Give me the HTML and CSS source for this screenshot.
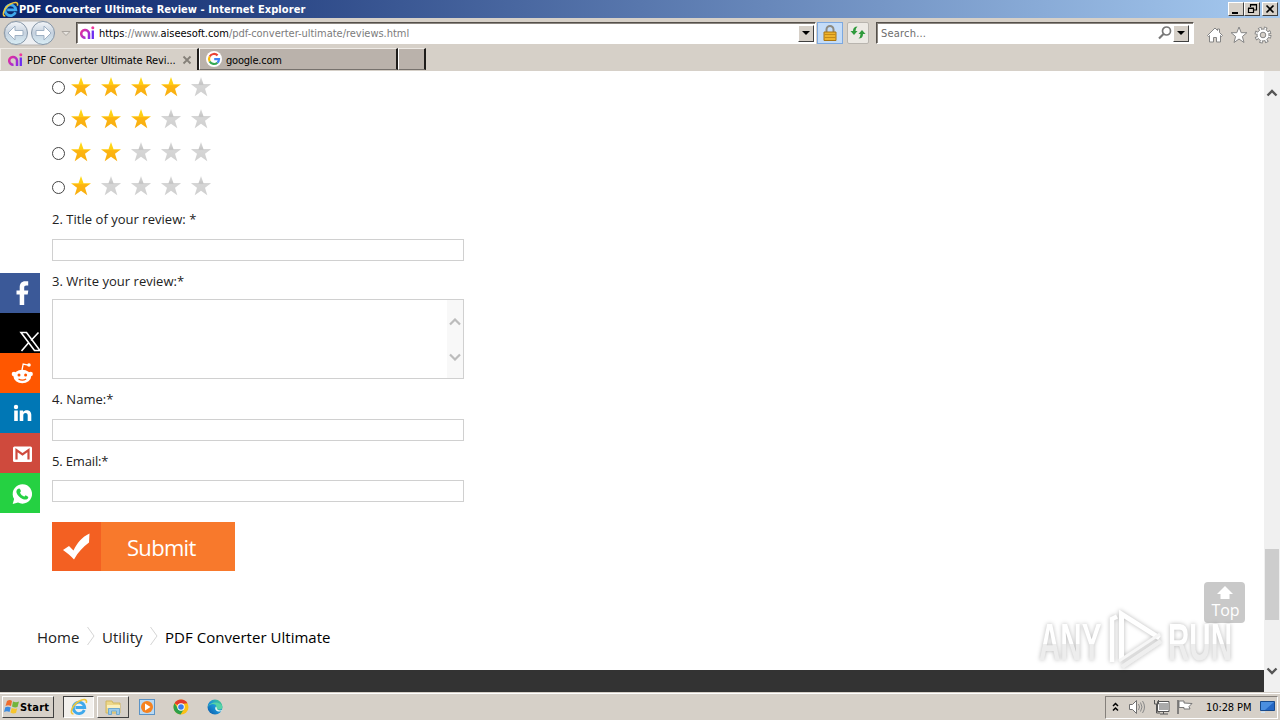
FILE: index.html
```html
<!DOCTYPE html>
<html lang="en">
<head>
    <meta charset="UTF-8">
    <meta name="viewport" content="width=device-width, initial-scale=1.0">
    <title>PDF Converter Ultimate Review</title>
    <link rel="stylesheet" href="styles.css">
</head>
<body>

<!-- shared shapes -->
<svg class="defs" width="0" height="0">
    <defs>
        <linearGradient id="gold" x1="0" y1="0" x2="0" y2="1">
            <stop offset="0" stop-color="#ffdf1c"/>
            <stop offset="0.4" stop-color="#ffca12"/>
            <stop offset="0.45" stop-color="#fdb511"/>
            <stop offset="1" stop-color="#f8ae10"/>
        </linearGradient>
        <linearGradient id="silver" x1="0" y1="0" x2="0" y2="1">
            <stop offset="0" stop-color="#dedede"/>
            <stop offset="0.38" stop-color="#c4c4c4"/>
            <stop offset="0.45" stop-color="#d6d6d6"/>
            <stop offset="1" stop-color="#cfcfcf"/>
        </linearGradient>
        <linearGradient id="aigrad" x1="0" y1="0" x2="1" y2="1">
            <stop offset="0" stop-color="#e5309a"/>
            <stop offset="1" stop-color="#8d2be8"/>
        </linearGradient>
        <linearGradient id="edgegrad" x1="0" y1="1" x2="1" y2="0">
            <stop offset="0" stop-color="#0b56a5"/>
            <stop offset="0.5" stop-color="#1a93d8"/>
            <stop offset="1" stop-color="#4fd47c"/>
        </linearGradient>
        <linearGradient id="disc" x1="0" y1="0" x2="0" y2="1">
            <stop offset="0" stop-color="#f4f6f9"/>
            <stop offset="0.5" stop-color="#c5d1de"/>
            <stop offset="1" stop-color="#d9eef6"/>
        </linearGradient>
        <symbol id="star" viewBox="0 0 20 20"><path d="M10 0l2.500 7.200H20l-6 4.600 2.300 7.400L10 14.800l-6.300 4.400L6 11.800 0 7.200h7.500z"/></symbol>
        <symbol id="ai" viewBox="0 0 16 16">
            <path d="M9 14V8.500a3.900 3.900 0 1 0-3.500 4.200" fill="none" stroke="url(#aigrad)" stroke-width="2.500"/>
            <path d="M12.800 5.500V14" stroke="#6c2df0" stroke-width="2.300"/><circle cx="12.800" cy="2.800" r="1.500" fill="#f0399b"/>
        </symbol>
        <symbol id="ie" viewBox="0 0 18 18">
            <path d="M14.300 12A5.700 5.700 0 1 1 14.700 9.500H5.500" fill="none" stroke="#3fa9ec" stroke-width="2.900"/>
            <path d="M3.500 16C-1 16 2 7 9 3.200c4.500-2.500 8.500-2.400 7.300 1.800" fill="none" stroke="#efc63a" stroke-width="1.600"/>
        </symbol>
    </defs>
</svg>

<div class="window">
    <div class="titlebar">
        <svg width="17" height="17"><use href="#ie"/></svg>
        <span class="title-text">PDF Converter Ultimate Review - Internet Explorer</span>
        <div class="win-buttons">
            <span class="win-btn"><svg width="14" height="12"><path d="M3 9h6v2H3z"/></svg></span>
            <span class="win-btn"><svg width="14" height="12"><path d="M5.500 4V2h6v5H9M5 1.500h7M3.500 5.500h5v4h-5zM3 5h6" fill="none" stroke="#000" stroke-width="1.200"/></svg></span>
            <span class="win-btn close"><svg width="14" height="12"><path d="M3.500 2.500l7 7M10.500 2.500l-7 7" stroke="#000" stroke-width="1.700"/></svg></span>
        </div>
    </div>

    <div class="navbar">
        <svg class="travel" width="72" height="29">
            <rect x="4" y="3" width="50" height="24" rx="12" fill="#eef0f3" stroke="#b9b5b0"/>
            <circle cx="16" cy="15" r="11.500" fill="url(#disc)" stroke="#8797a8"/>
            <circle cx="43" cy="15" r="11.500" fill="url(#disc)" stroke="#8797a8"/>
            <path d="M8 15l7-7v4.500h8v5h-8V22z" fill="#fff" stroke="#9fb1c4"/>
            <path d="M51 15l-7-7v4.500h-8v5h8V22z" fill="#fff" stroke="#9fb1c4"/>
            <path d="M62 13.500h8l-4 4z" fill="#e7e4df" stroke="#aaa59f"/>
        </svg>
        <div class="address">
            <svg width="16" height="16"><use href="#ai"/></svg>
            <span class="url"><b>https</b>://www.<b>aiseesoft.com</b>/pdf-converter-ultimate/reviews.html</span>
            <span class="drop"></span>
        </div>
        <span class="tool lock"><svg width="18" height="18"><path d="M5.500 9V5.500a3.500 3.500 0 0 1 7 0V9" fill="none" stroke="#8d8a80" stroke-width="2"/><path d="M3 8h12v8.500H3z" fill="#eeb32c" stroke="#a87412"/><path d="M3.500 10.500h11M3.500 13.500h11" stroke="#c48a18"/></svg></span>
        <span class="tool refresh"><svg width="18" height="18"><path d="M5 11L1.500 7H4q0-4.500 4.500-4.500Q6.500 4 6.500 7h2z" fill="#2f9a3c"/><path d="M13 6l3.500 4H14q0 4.500-4.500 4.500 2-1.500 2-4.500h-2z" fill="#2f9a3c"/></svg></span>
        <div class="search">
            <span>Search...</span>
            <svg width="16" height="16"><circle cx="9.500" cy="6" r="4" fill="#fff" stroke="#777" stroke-width="1.700"/><path d="M6.500 9L2 13.500" stroke="#777" stroke-width="2.200"/></svg>
            <span class="drop"></span>
        </div>
        <div class="commands">
            <svg width="18" height="18"><path d="M1.500 9.500L9 2l2.500 2.500V3h2v3.500l3 3-1 1-1-1V16h-4v-4.500h-3V16h-4V9.500l-1 1z" fill="#fff" stroke="#858585"/></svg>
            <svg width="18" height="18"><path d="M9 1l2.200 5.700h5.700l-4.500 3.800L14 16.500 9 13l-5 3.500 1.600-6L1.100 6.700h5.700z" fill="#fff" stroke="#858585"/></svg>
            <svg width="18" height="18"><circle cx="9" cy="9" r="6.500" fill="none" stroke="#858585" stroke-width="4" stroke-dasharray="3 2.105"/><circle cx="9" cy="9" r="6" fill="#fff" stroke="#858585"/><circle cx="9" cy="9" r="6.500" fill="none" stroke="#fff" stroke-width="2.200" stroke-dasharray="1.400 3.705" stroke-dashoffset="-.8"/><circle cx="9" cy="9" r="2.800" fill="#d6d0c8" stroke="#858585"/></svg>
        </div>
    </div>

    <div class="tabs">
        <div class="tab active">
            <svg width="16" height="16"><use href="#ai"/></svg>
            <span class="tab-name">PDF Converter Ultimate Revi...</span>
            <svg width="10" height="10"><path d="M1.500 1.500l7 7M8.500 1.500l-7 7" stroke="#858079" stroke-width="1.800"/></svg>
        </div>
        <div class="tab google">
            <svg width="16" height="16" viewBox="0 0 16 16"><circle cx="8" cy="8" r="8" fill="#fff"/><g fill="none" stroke-width="2.200"><path d="M11.600 4.400A5 5 0 0 0 3.700 5.500" stroke="#ea4335"/><path d="M3.700 5.500a5 5 0 0 0 0 5" stroke="#fbbc05"/><path d="M3.700 10.500a5 5 0 0 0 7.700 1.200" stroke="#34a853"/><path d="M11.400 11.700A5 5 0 0 0 13 8.200H8.200" stroke="#4285f4"/></g></svg>
            <span>google.com</span>
        </div>
        <div class="tab blank"></div>
    </div>

    <div class="viewport">
        <div class="page">
            <form class="review-form">
                <div class="rating r4"><input type="radio" name="rating"><svg class="on"><use href="#star"/></svg><svg class="on"><use href="#star"/></svg><svg class="on"><use href="#star"/></svg><svg class="on"><use href="#star"/></svg><svg><use href="#star"/></svg></div>
                <div class="rating r3"><input type="radio" name="rating"><svg class="on"><use href="#star"/></svg><svg class="on"><use href="#star"/></svg><svg class="on"><use href="#star"/></svg><svg><use href="#star"/></svg><svg><use href="#star"/></svg></div>
                <div class="rating r2"><input type="radio" name="rating"><svg class="on"><use href="#star"/></svg><svg class="on"><use href="#star"/></svg><svg><use href="#star"/></svg><svg><use href="#star"/></svg><svg><use href="#star"/></svg></div>
                <div class="rating r1"><input type="radio" name="rating"><svg class="on"><use href="#star"/></svg><svg><use href="#star"/></svg><svg><use href="#star"/></svg><svg><use href="#star"/></svg><svg><use href="#star"/></svg></div>

                <label for="title">2. Title of your review: *</label>
                <input type="text" id="title">
                <label class="l3" for="review">3. Write your review:*</label>
                <div class="textarea" id="review">
                    <div class="mini-scroll">
                        <svg width="12" height="8"><path d="M1 6.500l5-5 5 5" fill="none" stroke="#bcbcbc" stroke-width="2.200"/></svg>
                        <svg width="12" height="8"><path d="M1 1.500l5 5 5-5" fill="none" stroke="#bcbcbc" stroke-width="2.200"/></svg>
                    </div>
                </div>
                <label for="name">4. Name:*</label>
                <input type="text" id="name">
                <label class="l5" for="email">5. Email:*</label>
                <input type="text" id="email">

                <button type="button" class="submit">
                    <span class="check"><svg width="30" height="30"><path d="M0 18l6-4 4.500 4.500C14 11 19 5 26.500 1.500l-.5 9C20 15 15 20 11 27.500 8 24 4 21 0 18z" fill="#fff"/></svg></span>
                    <span class="submit-text">Submit</span>
                </button>
            </form>

            <div class="breadcrumb">
                <span class="c-home">Home</span>
                <svg width="10" height="20"><path d="M1.500 1l6.500 9-6.500 9" fill="none" stroke="#d5d5d5"/></svg>
                <span class="c-util">Utility</span>
                <svg width="10" height="20"><path d="M1.500 1l6.500 9-6.500 9" fill="none" stroke="#d5d5d5"/></svg>
                <span class="c-pdf">PDF Converter Ultimate</span>
            </div>

            <div class="footer"></div>
        </div>

        <div class="scrollbar">
            <svg class="up" width="12" height="9"><path d="M1.500 7.500L6 3l4.500 4.500" fill="none" stroke="#555" stroke-width="2.400"/></svg>
            <div class="thumb"></div>
            <svg class="down" width="12" height="9"><path d="M1.500 1.500L6 6l4.500-4.500" fill="none" stroke="#555" stroke-width="2.400"/></svg>
        </div>

        <div class="share">
            <span class="fb"><svg width="40" height="40"><path d="M19.700 32V21.500h-3.200v-4h3.200v-3c0-4.200 2-6.300 5.500-6.300h3v4.300h-1.800c-1.700 0-2.200.8-2.200 2.200v2.800h4.100l-.6 4h-3.500V32z" fill="#fff"/></svg></span>
            <span class="x"><svg width="40" height="40"><path d="M21 19.500h5.500L40 37.500h-5.500zM38.500 19.500l-7.500 8M28.800 29.500L21.500 38" fill="none" stroke="#fff" stroke-width="1.600"/></svg></span>
            <span class="reddit"><svg width="40" height="40"><ellipse cx="22.300" cy="23.500" rx="8.800" ry="6.800" fill="#fff"/><circle cx="14" cy="21" r="2.300" fill="#fff"/><circle cx="30.600" cy="21" r="2.300" fill="#fff"/><path d="M22 17l1.200-6 5 1.200" fill="none" stroke="#fff" stroke-width="1.300"/><circle cx="29" cy="12" r="1.800" fill="#fff"/><circle cx="19" cy="22" r="1.500" fill="#ff5700"/><circle cx="25.600" cy="22" r="1.500" fill="#ff5700"/><path d="M18.500 26q3.800 2.400 7.600 0" fill="none" stroke="#ff5700" stroke-width="1.200"/></svg></span>
            <span class="linkedin"><svg width="40" height="40"><g fill="#fff"><circle cx="16" cy="14" r="2.200"/><path d="M14.200 17.500h3.600V28h-3.600zM19.700 17.500h3.400v1.400c2-2.800 8.200-2.400 8.200 2.900V28h-3.600v-5.500c0-3.200-4.400-3.200-4.400 0V28h-3.600z"/></g></svg></span>
            <span class="gmail"><svg width="40" height="40"><rect x="13" y="13.500" width="19" height="15.500" rx="1.500" fill="#fff"/><path d="M16.500 26.500v-9.300l6 4.300 6-4.300v9.300" fill="none" stroke="#cf4a3d" stroke-width="2.200"/></svg></span>
            <span class="whatsapp"><svg width="40" height="40"><path d="M12.700 31l1.400-5A9.700 9.700 0 1 1 18 29.600z" fill="#fff"/><path d="M18.400 15.800c1.500-.8 1.800.4 2.500 2.200.2.800-1.200 1.400-.7 2.100 1 1.800 2 2.700 3.800 3.500.8.300 1.200-1.500 2-1.200 2 1 2.700 1.200 2.100 2.500-.8 2-3.300 2-5.500 1-3.200-1.300-5-3.700-6-5.900-.7-2 .4-3.700 1.800-4.200z" fill="#25d142"/></svg></span>
        </div>

        <div class="to-top">
            <svg width="18" height="16"><path d="M9 1l8 8h-3.500v5h-9V9H1z" fill="#fff"/></svg>
            <span>Top</span>
        </div>

        <div class="watermark">
            <span class="any">ANY</span>
            <svg width="60" height="64" viewBox="0 0 60 64"><path d="M6 53V10l5-2.500" fill="none" stroke="#fff" stroke-width="4.500"/><path d="M15.500 50V5l38 24" fill="none" stroke="#fff" stroke-width="5"/><path d="M55 32L16 58" fill="none" stroke="#efefef" stroke-width="4.500"/><path d="M54 25L13 52" fill="none" stroke="#f6f6f6" stroke-width="3"/></svg>
            <span class="run">RUN</span>
        </div>
    </div>

    <div class="taskbar">
        <div class="start">
            <svg width="16" height="16"><path d="M3 2q3-2 5 0L7 7Q4 5.500 1.500 7z" fill="#ef6c2c"/><path d="M9 2.500q3 1.500 6 0L13.500 8Q11 9 8 7.500z" fill="#73b53c"/><path d="M1.300 8.200Q4 7 6.700 8.500L5.500 13Q3 11.500 0 13z" fill="#3b8be0"/><path d="M7.700 9q3 1.500 5.500.3L12 14q-3 1.200-5.500-.5z" fill="#f7c52d"/></svg>
            <span>Start</span>
        </div>
        <div class="task pressed"><svg width="18" height="18"><use href="#ie"/></svg></div>
        <div class="task raised"><svg width="18" height="18"><path d="M2 3h6l1 2h7v10H2z" fill="#edd788" stroke="#d0b660"/><path d="M3 7h13v3H3z" fill="#fbf0bd"/><path d="M4.500 16.500v-6h11v6h-3V13h-5v3.500z" fill="#9bcaeb" stroke="#6fa9cf"/></svg></div>
        <svg class="pin media" width="16" height="16"><rect x=".5" y=".5" width="15" height="15" fill="#b9d9f3" stroke="#5b93c6"/><circle cx="8" cy="8" r="6" fill="#f58220"/><path d="M6 4.500v7L11.500 8z" fill="#fff"/></svg>
        <svg class="pin chrome" width="16" height="16"><circle cx="8" cy="8" r="7.500" fill="#fbc116"/><path d="M8 8L1.500 4.200A7.500 7.500 0 0 1 14.500 4.200L8 5z" fill="#e33b2e"/><path d="M1.500 4.200A7.500 7.500 0 0 0 7.500 15.500L11 10 5 9.500z" fill="#2da04b"/><circle cx="8" cy="8" r="3.700" fill="#fff"/><circle cx="8" cy="8" r="2.800" fill="#3b7ded"/></svg>
        <svg class="pin edge" width="16" height="16"><circle cx="8" cy="8" r="7.500" fill="url(#edgegrad)"/><path d="M15 11.500c-3 1-6.500.4-6.500-2 0-1.200.8-1.500.8-2.500C9 4.500 3 4 1 8c1-6 14-6 14.400 0 .1 2.500-3.400 3-4.400 2 .5 1.500 2.500 2 4 1.500z" fill="#56d3a6"/><path d="M9 7.500c-1.500 1.500-.8 4.500 2.500 5 1.500.2 2.700-.2 3.300-.7l.5-.8c-2.800 1-5.800 0-5.500-2z" fill="#e8f3f5"/></svg>
        <div class="tray">
            <svg width="8" height="12"><path d="M1 5l2.500-2.500L6 5M1 9.500L3.500 7 6 9.500" fill="none" stroke="#000" stroke-width="1.500"/></svg>
            <svg class="sound" width="18" height="16"><path d="M1.500 5.500h3l4-4v13l-4-4h-3z" fill="#fff" stroke="#707070"/><path d="M10.500 5q2 3 0 6M12.500 3.500q3 4.500 0 9M14.500 2q4 6 0 12" fill="none" stroke="#888"/></svg>
            <svg class="net" width="17" height="16"><path d="M5.500 3.500h10v8h-10z" fill="#aaa" stroke="#fff"/><path d="M4.500 2.500h11.500v10H4.500zM7 15h8M10.500 12.500V15M1.500 1v4h4V1M3.500 5v9H7" fill="none" stroke="#555"/></svg>
            <svg class="flag" width="18" height="16"><path d="M3 2h5v2l8 .5-3 3 1 2.500H8V8.500H3z" fill="#fff" stroke="#777"/><path d="M2 1v14" stroke="#666" stroke-width="1.500"/></svg>
            <span class="clock">10:28 PM</span>
            <svg class="desk" width="15" height="14"><path d="M.5 1.500h14v9H.5z" fill="#2467c5" stroke="#174a8c"/><path d="M1 2h13L5 10H1z" fill="#4b8fe0"/><path d="M1 11.500h4v1.500H1z" fill="#cfe3f5"/></svg>
        </div>
    </div>
</div>

</body>
</html>
```
FILE: styles.css
```css
* {
    box-sizing: border-box;
}
body {
    margin: 0;
    font-family: "Open Sans", "Noto Sans", sans-serif;
    overflow: hidden;
}
svg {
    display: block;
    flex: none;
}
.defs {
    position: absolute;
}
.window {
    width: 1280px;
    height: 720px;
    display: flex;
    flex-direction: column;
    background: #d6d0c8;
    font-family: "DejaVu Sans Condensed", "DejaVu Sans", sans-serif;
    font-size: 11px;
    white-space: nowrap;
}

/* title bar */
.titlebar {
    height: 18px;
    display: flex;
    align-items: center;
    padding: 0 2px;
    background: linear-gradient(to right, #0a246a, #a6caf0);
    color: #fff;
}
.title-text {
    font-weight: bold;
    font-size: 11px;
    letter-spacing: 0.07px;
}
.win-buttons {
    display: flex;
    margin-left: auto;
}
.win-btn {
    width: 16px;
    height: 14px;
    background: #d6d0c8;
    border: 1px solid;
    border-color: #fff #404040 #404040 #fff;
}
.win-btn.close {
    margin-left: 2px;
}

/* address row */
.navbar {
    height: 30px;
    display: flex;
    align-items: flex-start;
}
.travel {
    margin-right: 4px;
}
.address, .search {
    height: 22px;
    margin-top: 4px;
    display: flex;
    align-items: center;
    background: #fff;
    border: 1px solid;
    border-color: #55504b #fff #fff #55504b;
    box-shadow: inset 1px 1px 0 #8b8680;
}
.address {
    width: 740px;
    padding: 0 1px 0 3px;
}
.url {
    margin-left: 3px;
    color: #7b7b7b;
    letter-spacing: -0.03px;
}
.url b {
    font-weight: normal;
    color: #000;
}
.drop {
    width: 16px;
    height: 17px;
    background: #d6d0c8;
    border: 1px solid;
    border-color: #fff #404040 #404040 #fff;
    display: flex;
    align-items: center;
    justify-content: center;
}
.drop::before {
    content: "";
    border: 4px solid transparent;
    border-top-color: #000;
    border-bottom: 0;
}
.address .drop {
    margin-left: auto;
}
.tool {
    height: 22px;
    margin-top: 4px;
    display: flex;
    align-items: center;
    justify-content: center;
    border: 1px solid #b9b5af;
    background: #ece9e4;
}
.lock {
    width: 26px;
    margin-left: 1px;
    background: #c4dcf8;
    border-color: #7ca8e0;
}
.refresh {
    width: 22px;
    margin-left: 4px;
    border-radius: 2px;
}
.search {
    width: 318px;
    margin-left: 7px;
    padding: 0 4px;
    color: #6d6d6d;
    letter-spacing: 0.2px;
}
.search svg {
    margin-left: auto;
}
.commands {
    display: flex;
    gap: 6px;
    margin: 8px 0 0 12px;
}

/* tabs */
.tabs {
    height: 23px;
    display: flex;
}
.tab {
    display: flex;
    align-items: center;
    height: 22px;
    border-right: 2px solid #1e1c1a;
    border-top: 1px solid #eeeae5;
}
.tab.active {
    width: 199px;
    padding-left: 7px;
    border-left: 1px solid #eeeae5;
}
.tab-name {
    width: 151px;
    margin: 1px 4px 0 3px;
    letter-spacing: -0.07px;
}
.tab.google {
    width: 199px;
    padding-left: 6px;
    gap: 4px;
    letter-spacing: -0.2px;
    background: #bab2ab;
    border-left: 1px solid #fff;
    border-bottom: 1px solid #77726d;
}
.tab.google span {
    margin-top: 2px;
}
.tab.blank {
    width: 28px;
    background: #bab2ab;
    border-left: 1px solid #fff;
    border-bottom: 1px solid #77726d;
}

/* page area */
.viewport {
    position: relative;
    display: flex;
    height: 621px;
    background: #fff;
    font-family: "Open Sans", "Noto Sans", sans-serif;
}
.page {
    width: 1264px;
    display: flex;
    flex-direction: column;
}
.review-form {
    padding-left: 52px;
    display: flex;
    flex-direction: column;
    align-items: flex-start;
}
.rating {
    display: flex;
    align-items: center;
    gap: 10px;
}
.rating.r4 {
    height: 31px;
}
.rating.r3 {
    height: 33px;
}
.rating.r2, .rating.r1 {
    height: 34px;
}
.rating.r1 {
    margin-bottom: 1px;
}
.rating input {
    appearance: none;
    width: 13px;
    height: 13px;
    margin: 2px -4px 0 0;
    border: 1px solid #444;
    border-radius: 50%;
    background: #fff;
}
.rating svg {
    width: 20px;
    height: 20px;
    fill: url(#silver);
}
.rating svg.on {
    fill: url(#gold);
}
.review-form label {
    height: 35px;
    line-height: 30px;
    font-size: 13px;
    color: #222;
    letter-spacing: 0.03px;
}
.review-form label.l3 {
    height: 38px;
    line-height: 40px;
}
.review-form input[type="text"] {
    width: 412px;
    height: 22px;
    margin: 0;
    border: 1px solid #d0d0d0;
    background: #fff;
}
.textarea {
    width: 412px;
    height: 80px;
    border: 1px solid #d0d0d0;
    display: flex;
    justify-content: flex-end;
}
.mini-scroll {
    width: 16px;
    padding: 18px 2px 17px;
    background: #f8f8f8;
    display: flex;
    flex-direction: column;
    justify-content: space-between;
}
.review-form .textarea + label {
    height: 40px;
    line-height: 40px;
}
.review-form label.l5 {
    height: 39px;
    line-height: 40px;
    letter-spacing: -0.15px;
}
.submit {
    width: 183px;
    height: 49px;
    margin: 20px 0 0;
    padding: 0;
    border: 0;
    display: flex;
    background: #f8792c;
    color: #fff;
    font-family: inherit;
    font-size: 22px;
}
.check {
    width: 49px;
    height: 49px;
    padding: 10px 0 0 11px;
    background: #f36022;
}
.submit-text {
    line-height: 51px;
    margin-left: 26px;
    letter-spacing: -0.7px;
}
.breadcrumb {
    display: flex;
    align-items: center;
    height: 30px;
    margin: 51px 0 0 37px;
    font-size: 15px;
    color: #222;
}
.breadcrumb svg {
    margin: -2px 6px 0;
}
.c-home {
    width: 43px;
}
.c-util {
    width: 41px;
}
.c-pdf {
    color: #000;
    letter-spacing: 0.03px;
}
.footer {
    height: 22px;
    margin-top: auto;
    background: #333;
}
.scrollbar {
    width: 16px;
    background: #f0f0f0;
    display: flex;
    flex-direction: column;
    align-items: center;
    padding: 17px 0;
}
.thumb {
    width: 14px;
    height: 71px;
    margin-top: 452px;
    background: #cdcdcd;
}
.scrollbar .down {
    margin-top: auto;
    margin-bottom: -1px;
}

/* things floating over the page */
.share {
    position: absolute;
    left: 0;
    top: 202px;
}
.share span {
    display: block;
    width: 40px;
    height: 40px;
}
.fb {
    background: #3b5998;
}
.x {
    background: #000;
}
.reddit {
    background: #ff5700;
}
.linkedin {
    background: #0077b5;
}
.gmail {
    background: #cf4a3d;
}
.whatsapp {
    background: #25d142;
}
.to-top {
    position: absolute;
    left: 1204px;
    top: 511px;
    width: 41px;
    height: 41px;
    border-radius: 4px;
    background: #c9c9c9;
    color: #fff;
    font-size: 16px;
    line-height: 18px;
    display: flex;
    flex-direction: column;
    align-items: center;
    padding-top: 3px;
}
.to-top span {
    margin: 0 0 0 2px;
}
.watermark {
    position: absolute;
    left: 1039px;
    top: 538px;
    display: flex;
    align-items: center;
    font-family: "Liberation Sans", Arial, sans-serif;
    font-size: 51px;
    font-weight: bold;
    line-height: 40px;
    filter: drop-shadow(0 0 2px rgba(0, 0, 0, 0.28));
}
.watermark span {
    width: 112px;
    margin: 4px -48px 0 0;
    transform: scaleX(0.58);
    transform-origin: left center;
    color: transparent;
    background: linear-gradient(#fff 52%, #ededed 52%);
    background-clip: text;
}
.watermark svg {
    margin: 0 2px 0 3px;
}

/* taskbar */
.taskbar {
    height: 28px;
    display: flex;
    align-items: center;
    padding: 1px 2px 0;
    border-top: 1px solid #d6d0c8;
    box-shadow: inset 0 1px 0 #fff;
    background: #d6d0c8;
}
.start {
    width: 52px;
    height: 22px;
    display: flex;
    align-items: center;
    padding-left: 1px;
    font-weight: bold;
    letter-spacing: 0.2px;
    border: 1px solid;
    border-color: #fff #404040 #404040 #fff;
}
.task {
    height: 22px;
    display: flex;
    align-items: center;
    justify-content: center;
    border: 1px solid;
}
.task.pressed {
    width: 31px;
    margin-left: 9px;
    background: #f2f0ed;
    border-color: #404040 #fff #fff #404040;
}
.task.raised {
    width: 32px;
    margin-left: 3px;
    border-color: #fff #404040 #404040 #fff;
}
.pin {
    margin-left: 18px;
}
.pin.media {
    margin-left: 10px;
}
.tray {
    width: 173px;
    height: 23px;
    margin-left: auto;
    display: flex;
    align-items: center;
    padding-left: 6px;
    border: 1px solid;
    border-color: #85807b #fff #fff #85807b;
}
.sound {
    margin-left: 8px;
}
.net {
    margin-left: 7px;
}
.flag {
    margin-left: 6px;
}
.clock {
    margin-left: 12px;
    width: 46px;
    letter-spacing: -0.1px;
}
.desk {
    margin-left: 8px;
}
```
